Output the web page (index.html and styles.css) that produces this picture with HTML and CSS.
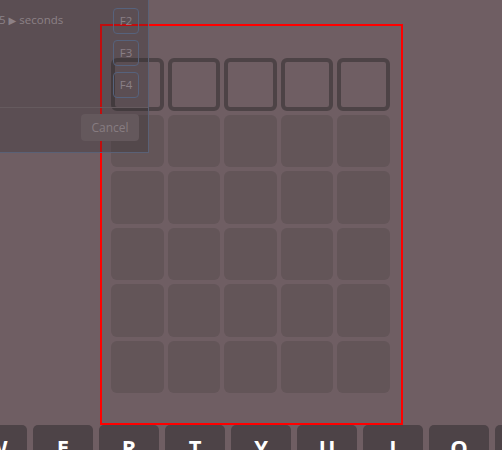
FILE: index.html
```html
<!DOCTYPE html>
<html>
<head>
<meta charset="utf-8">
<link rel="stylesheet" href="styles.css">
</head>
<body>
<div class="page">
  <div class="board">
    <div class="grid">
      <div class="tile active"></div><div class="tile active"></div><div class="tile active"></div><div class="tile active"></div><div class="tile active"></div>
      <div class="tile"></div><div class="tile"></div><div class="tile"></div><div class="tile"></div><div class="tile"></div>
      <div class="tile"></div><div class="tile"></div><div class="tile"></div><div class="tile"></div><div class="tile"></div>
      <div class="tile"></div><div class="tile"></div><div class="tile"></div><div class="tile"></div><div class="tile"></div>
      <div class="tile"></div><div class="tile"></div><div class="tile"></div><div class="tile"></div><div class="tile"></div>
      <div class="tile"></div><div class="tile"></div><div class="tile"></div><div class="tile"></div><div class="tile"></div>
    </div>
  </div>
  <div class="keyboard">
    <div class="key">Q</div><div class="key">W</div><div class="key">E</div><div class="key">R</div><div class="key">T</div><div class="key">Y</div><div class="key">U</div><div class="key">I</div><div class="key">O</div><div class="key">P</div>
  </div>
  <div class="panel">
    <div class="panel-body">
      <div class="timer">5 <span class="tri">&#9654;</span> seconds</div>
      <div class="fkeys">
        <div class="fkey">F2</div>
        <div class="fkey">F3</div>
        <div class="fkey">F4</div>
      </div>
    </div>
    <div class="panel-foot">
      <div class="cancel">Cancel</div>
    </div>
  </div>
</div>
</body>
</html>
```
FILE: styles.css
```css
html, body {
  margin: 0;
  padding: 0;
  width: 502px;
  height: 450px;
  overflow: hidden;
  background: #6f5e63;
  font-family: "Open Sans", "DejaVu Sans", sans-serif;
}
.page {
  position: relative;
  width: 502px;
  height: 450px;
  overflow: hidden;
}
.board {
  margin: 24px 0 0 100px;
  border: 2px solid #ff0000;
  padding: 32px 0 0 9px;
  box-sizing: border-box;
  width: 303px;
  height: 401px;
}
.grid {
  display: grid;
  grid-template-columns: repeat(5, 52.5px);
  grid-template-rows: repeat(6, 52.5px);
  gap: 4px;
}
.tile {
  background: #635558;
  border-radius: 6px;
}
.tile.active {
  background: transparent;
  border: 4px solid #4d4346;
  border-radius: 6px;
}
.keyboard {
  display: flex;
  gap: 6px;
  margin-left: -99px;
  width: 700px;
}
.key {
  flex: 0 0 60px;
  height: 58px;
  background: #4d4347;
  border-radius: 5px;
  color: #ffffff;
  font-weight: 700;
  font-size: 22px;
  line-height: 22px;
  text-align: center;
  padding-top: 11px;
  box-sizing: border-box;
}
.panel {
  position: absolute;
  top: 0;
  left: 0;
  width: 149px;
  height: 153px;
  background: rgba(48, 44, 46, 0.3);
  border-right: 1px solid #5a6176;
  border-bottom: 1px solid #5a6176;
  box-sizing: border-box;
}
.panel-body {
  height: 108px;
  display: flex;
  justify-content: space-between;
  padding: 8px 9px 0 0;
  box-sizing: border-box;
  border-bottom: 1px solid #655a5e;
}
.timer {
  margin: 5px 0 0 -1px;
  font-size: 11.5px;
  line-height: 14px;
  color: #8c8186;
  white-space: nowrap;
}
.tri {
  font-size: 10px;
}
.fkeys {
  display: flex;
  flex-direction: column;
  gap: 6px;
}
.fkey {
  width: 26px;
  height: 26px;
  border: 1px solid #56627c;
  border-radius: 4px;
  box-sizing: border-box;
  color: #8a7f85;
  font-size: 11.5px;
  line-height: 24px;
  text-align: center;
}
.panel-foot {
  display: flex;
  justify-content: flex-end;
  padding: 6px 9px 0 0;
}
.cancel {
  width: 58px;
  height: 27px;
  background: #64585c;
  border-radius: 4px;
  color: #877c81;
  font-size: 12px;
  line-height: 27px;
  text-align: center;
}
```
